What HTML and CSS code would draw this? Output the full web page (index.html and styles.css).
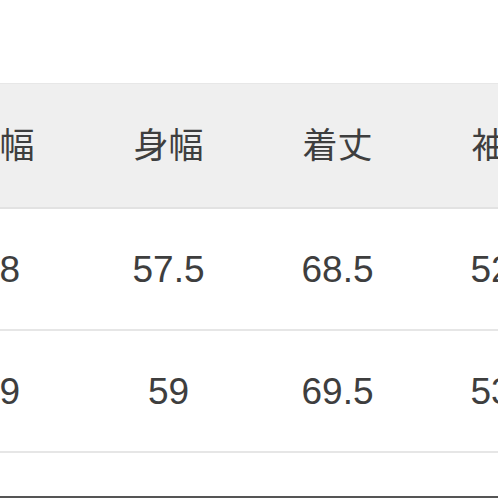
FILE: index.html
```html
<!DOCTYPE html>
<html lang="ja">
<head>
<meta charset="utf-8">
<title>サイズ表</title>
<link rel="stylesheet" href="styles.css">
</head>
<body>
<div class="page">
  <div class="table">
    <div class="row head">
      <div class="cell">肩幅</div>
      <div class="cell">身幅</div>
      <div class="cell">着丈</div>
      <div class="cell">袖丈</div>
    </div>
    <div class="row">
      <div class="cell">48</div>
      <div class="cell">57.5</div>
      <div class="cell">68.5</div>
      <div class="cell">52.5</div>
    </div>
    <div class="row">
      <div class="cell">49</div>
      <div class="cell">59</div>
      <div class="cell">69.5</div>
      <div class="cell">53.5</div>
    </div>
  </div>
  <div class="foot"></div>
</div>
</body>
</html>
```
FILE: styles.css
```css
html, body {
  margin: 0;
  padding: 0;
  width: 498px;
  height: 498px;
  overflow: hidden;
  background: #ffffff;
}
.page {
  width: 498px;
  height: 498px;
  overflow: hidden;
  display: flex;
  flex-direction: column;
  font-family: "Liberation Sans", "Noto Sans CJK JP", sans-serif;
  color: #3e3e3e;
  font-size: 37px;
}
.table {
  margin-top: 83px;
  margin-left: -85px;
  width: 676px;
  display: flex;
  flex-direction: column;
}
.row {
  display: grid;
  grid-template-columns: repeat(4, 169px);
  height: 120px;
  border-bottom: 2px solid #e6e6e6;
}
.row.head {
  height: 123px;
  background: #efefef;
  border-top: 1px solid #e7e7e7;
  border-bottom: 2px solid #e2e2e2;
  font-size: 35px;
}
.cell {
  display: flex;
  align-items: center;
  justify-content: center;
  line-height: 1;
}
.foot {
  margin-top: auto;
  height: 2px;
  background: #555555;
}
```
